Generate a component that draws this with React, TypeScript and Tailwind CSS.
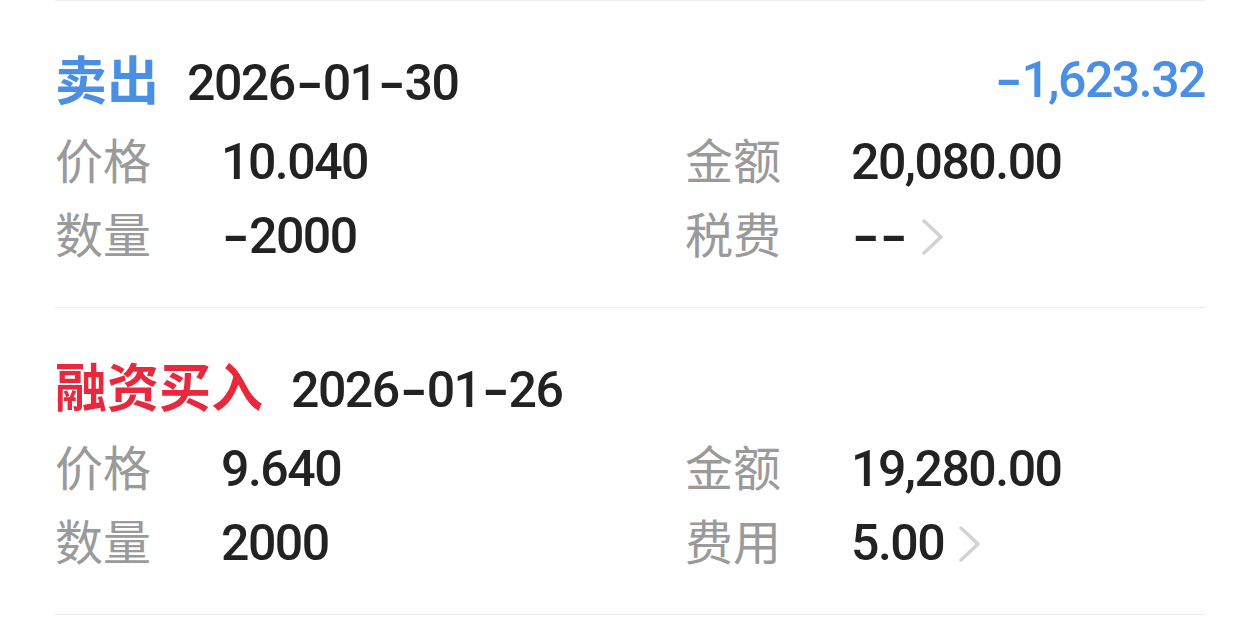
import { Fragment } from 'react';

type Trade = {
  side: string;
  sideColor: string;
  date: string;
  profit?: string;
  price: string;
  qty: string;
  amount: string;
  feeLabel: string;
  fee: string;
};

const trades: Trade[] = [
  {
    side: '卖出',
    sideColor: 'text-[#4a8fe3]',
    date: '2026-01-30',
    profit: '-1,623.32',
    price: '10.040',
    qty: '-2000',
    amount: '20,080.00',
    feeLabel: '税费',
    fee: '--',
  },
  {
    side: '融资买入',
    sideColor: 'text-[#e8283c]',
    date: '2026-01-26',
    price: '9.640',
    qty: '2000',
    amount: '19,280.00',
    feeLabel: '费用',
    fee: '5.00',
  },
];

const numFont = "font-['Roboto','Noto_Sans_CJK_SC',sans-serif] font-medium";
const cjkFont = "font-['Noto_Sans_CJK_SC',sans-serif]";

function Num({ text }: { text: string }) {
  const parts = text.split('-');
  return (
    <>
      {parts.map((p, i) => (
        <Fragment key={i}>
          {i > 0 && (
            <span className="inline-block w-[28px] text-center">
              <span className="inline-block scale-x-[1.55] scale-y-[1.1]">-</span>
            </span>
          )}
          {p}
        </Fragment>
      ))}
    </>
  );
}

function Chevron() {
  return (
    <svg width="24" height="36" viewBox="0 0 24 36" className="ml-[14px] self-center">
      <path d="M3 2 L20 18 L3 34" fill="none" stroke="#d2d2d2" strokeWidth="3.5" strokeLinecap="round" strokeLinejoin="round" />
    </svg>
  );
}

function Field({ label, value, chevron }: { label: string; value: string; chevron?: boolean }) {
  return (
    <div className="flex items-baseline">
      <span className={`${cjkFont} w-[166px] text-[48px] text-[#9a9a9a]`}>{label}</span>
      <span className={`${numFont} flex items-center text-[50px] tracking-[-1.5px] text-[#222]`}>
        <span>
          <Num text={value} />
        </span>
        {chevron && <Chevron />}
      </span>
    </div>
  );
}

function TradeItem({ t }: { t: Trade }) {
  return (
    <div className="border-b border-[#ececec] pt-[50px] pb-[35px]">
      <div className="flex h-[58px] items-center justify-between">
        <div className="flex items-baseline gap-[28px]">
          <span className={`${cjkFont} text-[52px] font-bold leading-none ${t.sideColor}`}>{t.side}</span>
          <span className={`${numFont} text-[50px] leading-none tracking-[-1.5px] text-[#222]`}>
            <Num text={t.date} />
          </span>
        </div>
        {t.profit && (
          <span className={`${numFont} text-[50px] leading-none tracking-[-1.5px] text-[#4a8fe3]`}>
            <Num text={t.profit} />
          </span>
        )}
      </div>
      <div className="mt-[15px] flex">
        <div className="w-[630px]">
          <div className="flex h-[74px] items-center">
            <Field label="价格" value={t.price} />
          </div>
          <div className="flex h-[74px] items-center">
            <Field label="数量" value={t.qty} />
          </div>
        </div>
        <div className="flex-1">
          <div className="flex h-[74px] items-center">
            <Field label="金额" value={t.amount} />
          </div>
          <div className="flex h-[74px] items-center">
            <Field label={t.feeLabel} value={t.fee} chevron />
          </div>
        </div>
      </div>
    </div>
  );
}

export default function App() {
  return (
    <div className="h-[623px] w-full overflow-hidden bg-white">
      <div className="mx-[55px] border-t border-[#ececec]">
        {trades.map((t) => (
          <TradeItem key={t.date} t={t} />
        ))}
      </div>
    </div>
  );
}
